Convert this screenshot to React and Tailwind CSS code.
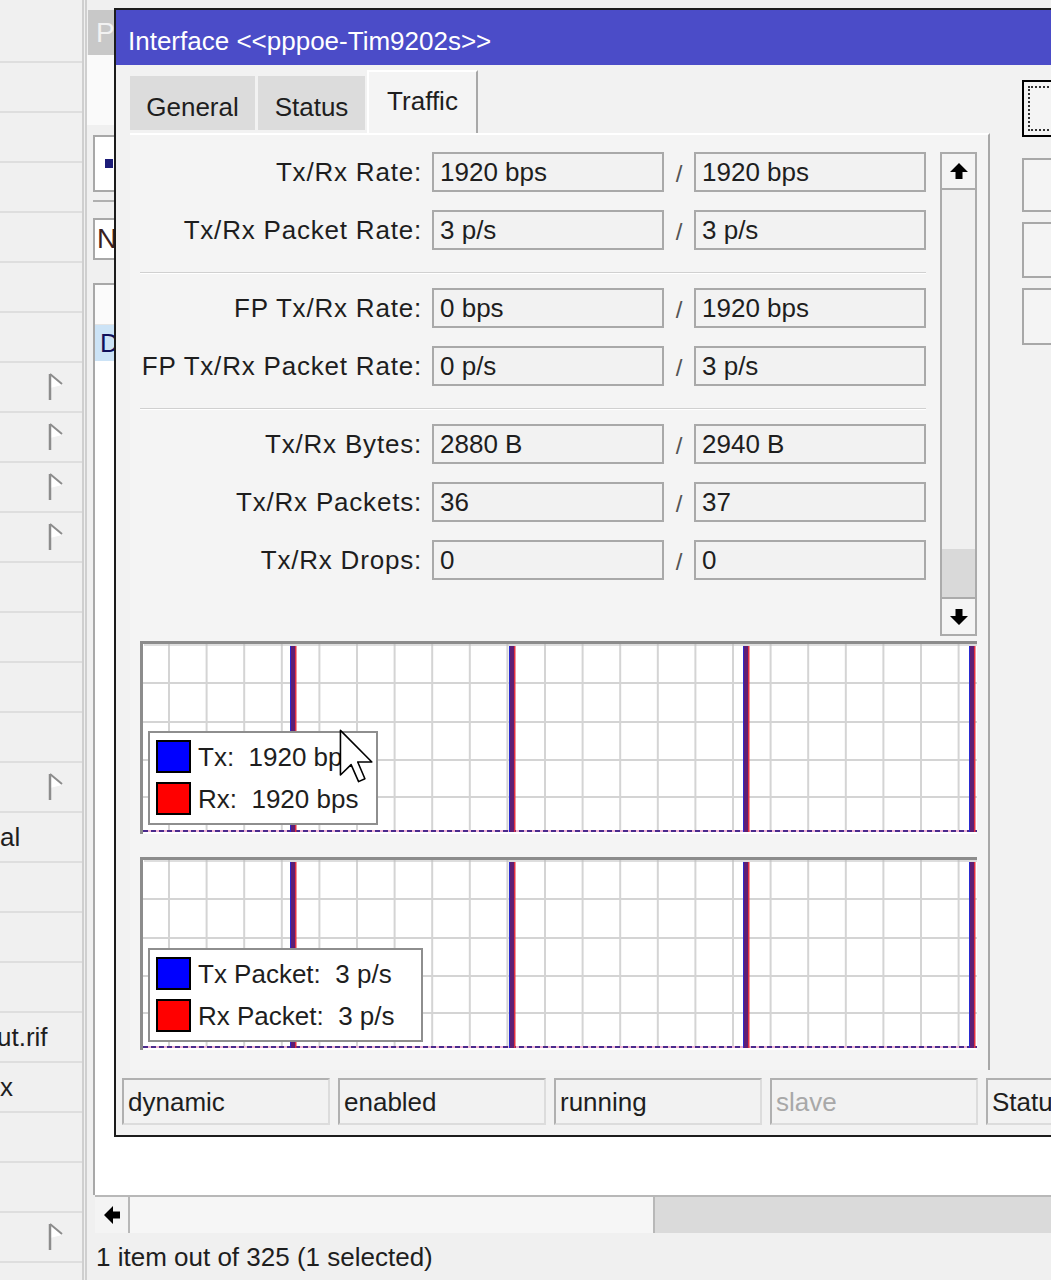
import React from 'react';

const leftRows = Array.from({ length: 26 }, (_, i) => i);
const flagRows = [7, 8, 9, 10, 15, 24];
const leftText = { 16: 'al', 20: 'ut.rif', 21: 'x' };

const rows = [
  ['Tx/Rx Rate:', '1920 bps', '1920 bps'],
  ['Tx/Rx Packet Rate:', '3 p/s', '3 p/s'],
  'sep',
  ['FP Tx/Rx Rate:', '0 bps', '1920 bps'],
  ['FP Tx/Rx Packet Rate:', '0 p/s', '3 p/s'],
  'sep',
  ['Tx/Rx Bytes:', '2880 B', '2940 B'],
  ['Tx/Rx Packets:', '36', '37'],
  ['Tx/Rx Drops:', '0', '0'],
];

const Flag = () => (
  <svg width="16" height="28" viewBox="0 0 16 28">
    <polygon points="2,2 14,12 2,15" fill="#ffffff" />
    <line x1="2" y1="1" x2="14" y2="11" stroke="#8c8c8c" strokeWidth="2" />
    <line x1="2" y1="1" x2="2" y2="27" stroke="#8c8c8c" strokeWidth="2.5" />
  </svg>
);

const ArrowUp = () => (
  <svg width="20" height="18" viewBox="0 0 20 18">
    <polygon points="10,1 19,10 13.5,10 13.5,17 6.5,17 6.5,10 1,10" fill="#000" />
  </svg>
);

const ArrowDown = () => (
  <svg width="20" height="18" viewBox="0 0 20 18">
    <polygon points="10,17 19,8 13.5,8 13.5,1 6.5,1 6.5,8 1,8" fill="#000" />
  </svg>
);

const ArrowLeft = () => (
  <svg width="18" height="20" viewBox="0 0 18 20">
    <polygon points="1,10 10,1 10,6.5 17,6.5 17,13.5 10,13.5 10,19" fill="#000" />
  </svg>
);

const Cursor = () => (
  <svg width="36" height="58" viewBox="0 0 12.5 19.5" className="absolute left-[339px] top-[728px]">
    <path d="M0.5 0.5 L0.5 16 L4.2 12.4 L6.8 18.3 L9 17.3 L6.5 11.5 L11.4 11.5 Z" fill="#fff" stroke="#000" strokeWidth="0.55" strokeLinejoin="round" />
  </svg>
);

function Chart({ legend, legendW, legendTop }) {
  const vx = Array.from({ length: 22 }, (_, k) => 29 + 37.6 * k);
  const hy = [42, 81, 119, 156];
  const bars = [153, 372, 606, 832];
  return (
    <div className="relative w-[837px] h-[193px]">
      <svg width="837" height="193" className="block">
        <rect x="0" y="0" width="837" height="193" fill="#ffffff" />
        {vx.map((x) => (
          <line key={x} x1={x} y1="0" x2={x} y2="190" stroke="#d4d4d4" strokeWidth="2" />
        ))}
        {hy.map((y) => (
          <line key={y} x1="0" y1={y} x2="837" y2={y} stroke="#d4d4d4" strokeWidth="2" />
        ))}
        <line x1="3" y1="190" x2="837" y2="190" stroke="#f0b4d4" strokeWidth="2" />
        <line x1="3" y1="190" x2="837" y2="190" stroke="#4a2a8c" strokeWidth="2" strokeDasharray="5 3" />
        {bars.map((x) => (
          <g key={x}>
            <rect x={x - 3} y="5" width="1.5" height="186" fill="#2a2ad0" />
            <rect x={x - 2} y="5" width="4" height="186" fill="#5e1f74" />
            <rect x={x + 2} y="5" width="1.5" height="186" fill="#e03040" />
          </g>
        ))}
        <path d="M1.5 193 V1.5 H837" stroke="#8c8c8c" strokeWidth="3" fill="none" />
        <line x1="4" y1="4" x2="837" y2="4" stroke="#bdbdbd" strokeWidth="1" />
      </svg>
      <div
        className="absolute left-[8px] bg-white border-2 border-[#8e8e8e] pl-[6px] pt-[7px] flex flex-col gap-[9px]"
        style={{ width: legendW, top: legendTop, height: 94 }}
      >
        {legend.map(([color, text]) => (
          <div key={text} className="flex items-center gap-[7px] h-[33px]">
            <div className={`w-[35px] h-[33px] border-2 border-black ${color}`} />
            <span className="text-[26px] leading-none whitespace-pre text-[#1e1e1e]">{text}</span>
          </div>
        ))}
      </div>
    </div>
  );
}

export default function App() {
  return (
    <div className="relative w-[1051px] h-[1280px] overflow-hidden bg-[#f0f0f0] font-['Liberation_Sans',Arial,sans-serif] text-[#1e1e1e]">
      {/* background: list pane + window */}
      <div className="flex h-full">
        <div className="w-[82px] pt-[13px] shrink-0">
          {leftRows.map((i) => (
            <div key={i} className="h-[50px] border-b-2 border-[#dedede] flex items-center relative">
              {leftText[i] && (
                <span className={`text-[26px] leading-none ${leftText[i] === 'ut.rif' ? '-ml-[3px]' : ''}`}>{leftText[i]}</span>
              )}
              {flagRows.includes(i) && (
                <div className="absolute left-[48px] top-[10px]">
                  <Flag />
                </div>
              )}
            </div>
          ))}
        </div>
        <div className="w-[5px] shrink-0 border-l-2 border-r-2 border-[#cfcfcf]" />
        <div className="flex-1 flex flex-col pt-[10px]">
          <div className="h-[45px] bg-[#c8c8c8] ml-[1px] pl-[8px] flex items-center">
            <span className="text-[28px] text-[#f2f2f2] leading-none">P</span>
          </div>
          <div className="h-[70px] bg-[#fafafa]" />
          <div className="pl-[6px] pt-[10px]">
            <div className="h-[57px] bg-white border-2 border-[#a8a8a8] flex items-center pl-[10px]">
              <div className="w-[8px] h-[9px] bg-[#1c1c78]" />
            </div>
            <div className="mt-[8px] h-[2px] bg-[#b0b0b0]" />
            <div className="mt-[16px] h-[42px] bg-white border-2 border-[#a8a8a8] flex items-center pl-[2px]">
              <span className="text-[28px] leading-none text-[#3a2020]">N</span>
            </div>
            <div className="mt-[23px] h-[912px] bg-white border-l-2 border-t-2 border-[#a8a8a8] flex flex-col">
              <div className="h-[40px] bg-[#fbfbfb] border-b border-[#e4e4e4]" />
              <div className="h-[36px] bg-[#cce3f6] flex items-center pl-[5px]">
                <span className="text-[26px] leading-none text-[#10105a]">D</span>
              </div>
            </div>
          </div>
          <div className="h-[38px] ml-[8px] flex border-t-2 border-[#b8b8b8] bg-[#dadada]">
            <div className="w-[35px] bg-[#f4f4f4] border-r-2 border-[#b8b8b8] flex items-center justify-center">
              <ArrowLeft />
            </div>
            <div className="w-[525px] bg-[#f6f6f6] border-r-2 border-[#b8b8b8]" />
          </div>
          <div className="flex-1 pl-[9px] flex items-center">
            <span className="text-[26px] leading-none">1 item out of 325 (1 selected)</span>
          </div>
        </div>
      </div>

      {/* Interface dialog */}
      <div className="absolute left-[114px] top-[8px] w-[1000px] h-[1129px] border-2 border-[#1c1c1c] bg-[#f2f2f2] flex flex-col">
        <div className="h-[55px] bg-[#4b4cc8] pl-[12px] pt-[7px] flex items-center">
          <span className="text-[26px] text-white leading-none">Interface &lt;&lt;pppoe-Tim9202s&gt;&gt;</span>
        </div>
        <div className="flex">
          <div className="pl-[14px] flex flex-col">
            <div className="h-[68px] flex items-end">
              <div className="w-[125px] h-[54px] mb-[3px] bg-[#dcdcdc] flex items-center justify-center pt-[7px]">
                <span className="text-[26px] leading-none">General</span>
              </div>
              <div className="ml-[3px] w-[107px] h-[54px] mb-[3px] bg-[#dcdcdc] flex items-center justify-center pt-[7px]">
                <span className="text-[26px] leading-none">Status</span>
              </div>
              <div className="ml-[2px] w-[111px] h-[63px] bg-[#f4f4f4] border-l-2 border-t-2 border-white border-r-2 border-r-[#a8a8a8] flex items-center justify-center pb-[3px]">
                <span className="text-[26px] leading-none">Traffic</span>
              </div>
            </div>
            <div className="w-[860px] h-[937px] bg-[#f4f4f4] border-t-2 border-white border-r-2 border-r-[#a8a8a8] pl-[10px] pt-[17px]">
              <div className="flex">
                <div className="w-[786px] flex flex-col">
                  {rows.map((r, i) =>
                    r === 'sep' ? (
                      <div key={i} className="mt-[22px] mb-[14px] h-[2px] bg-[#d0d0d0] border-b border-white" />
                    ) : (
                      <div key={i} className={`flex items-center h-[40px] ${i === 0 || rows[i - 1] === 'sep' ? '' : 'mt-[18px]'}`}>
                        <div className="w-[282px] text-right text-[26px] leading-none tracking-[0.8px]">{r[0]}</div>
                        <div className="ml-[10px] w-[232px] h-[40px] border-2 border-[#a9a9a9] bg-[#f2f2f2] flex items-center pl-[6px]">
                          <span className="text-[26px] leading-none">{r[1]}</span>
                        </div>
                        <div className="w-[30px] text-center text-[24px] leading-none text-[#555] pt-[4px]">/</div>
                        <div className="w-[232px] h-[40px] border-2 border-[#a9a9a9] bg-[#f2f2f2] flex items-center pl-[6px]">
                          <span className="text-[26px] leading-none">{r[2]}</span>
                        </div>
                      </div>
                    )
                  )}
                </div>
                <div className="ml-[14px] w-[37px] h-[484px] flex flex-col border-2 border-[#ababab] bg-[#f0f0f0]">
                  <div className="h-[36px] border-b-2 border-[#ababab] bg-[#f4f4f4] flex items-center justify-center">
                    <ArrowUp />
                  </div>
                  <div className="flex-1 flex flex-col justify-end">
                    <div className="h-[50px] bg-[#d9d9d9] border-b-2 border-[#ababab]" />
                  </div>
                  <div className="h-[35px] bg-[#f4f4f4] flex items-center justify-center">
                    <ArrowDown />
                  </div>
                </div>
              </div>
              <div className="mt-[5px]">
                <Chart
                  legendW={230}
                  legendTop={90}
                  legend={[
                    ['bg-[#0000ff]', 'Tx:  1920 bps'],
                    ['bg-[#ff0000]', 'Rx:  1920 bps'],
                  ]}
                />
              </div>
              <div className="mt-[23px]">
                <Chart
                  legendW={275}
                  legendTop={91}
                  legend={[
                    ['bg-[#0000ff]', 'Tx Packet:  3 p/s'],
                    ['bg-[#ff0000]', 'Rx Packet:  3 p/s'],
                  ]}
                />
              </div>
            </div>
          </div>
          <div className="ml-[32px] pt-[15px] flex flex-col">
            <div className="w-[120px] h-[57px] border-2 border-black p-[4px] bg-[#f4f4f4]">
              <div className="w-full h-full border-2 border-dotted border-[#333]" />
            </div>
            <div className="mt-[21px] w-[120px] h-[54px] border-2 border-[#a8a8a8] bg-[#f4f4f4]" />
            <div className="mt-[10px] w-[120px] h-[56px] border-2 border-[#a8a8a8] bg-[#f4f4f4]" />
            <div className="mt-[10px] w-[120px] h-[57px] border-2 border-[#a8a8a8] bg-[#f4f4f4]" />
          </div>
        </div>
        <div className="mt-[8px] h-[47px] pl-[6px] flex gap-[8px]">
          {[
            ['dynamic', ''],
            ['enabled', ''],
            ['running', ''],
            ['slave', 'text-[#a8a8a8]'],
            ['Status', ''],
          ].map(([t, c]) => (
            <div key={t} className="w-[208px] shrink-0 h-full border-2 border-[#dcdcdc] border-t-[#b0b0b0] border-l-[#b0b0b0] flex items-center pl-[4px]">
              <span className={`text-[26px] leading-none ${c}`}>{t}</span>
            </div>
          ))}
        </div>
      </div>

      <Cursor />
    </div>
  );
}
